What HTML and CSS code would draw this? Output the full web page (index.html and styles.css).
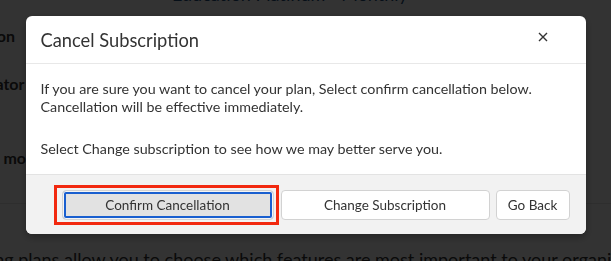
FILE: index.html
```html
<!DOCTYPE html>
<html lang="en">
<head>
  <meta charset="UTF-8">
  <meta name="viewport" content="width=device-width, initial-scale=1.0">
  <title>Cancel Subscription</title>
  <link rel="stylesheet" href="styles.css">
</head>
<body>
  <!-- page behind the dialog -->
  <div class="page">
    <h2 class="plan-name">Education Platinum - Monthly</h2>
    <div class="detail-row"><span class="label">Subscription</span></div>
    <div class="detail-row"><span class="label">Administrator</span></div>
    <div class="detail-row more"><span class="label">Learn more</span></div>
    <hr class="divider">
    <p class="intro">Flexible pricing plans allow you to choose which features are most important to your organization.</p>
  </div>

  <div class="overlay">
    <div class="modal">
      <div class="modal-header">
        <h3 class="modal-title">Cancel Subscription</h3>
        <button class="close-btn" aria-label="Close">
          <svg width="10" height="10" viewBox="0 0 10 10">
            <path d="M1 1 L9 9 M9 1 L1 9" stroke="#333" stroke-width="1.4" fill="none"/>
          </svg>
        </button>
      </div>
      <div class="modal-body">
        <p>If you are sure you want to cancel your plan, Select confirm cancellation below. Cancellation will be effective immediately.</p>
        <p>Select Change subscription to see how we may better serve you.</p>
      </div>
      <div class="modal-footer">
        <div class="highlight">
          <button class="btn btn-confirm">Confirm Cancellation</button>
        </div>
        <button class="btn btn-change">Change Subscription</button>
        <button class="btn btn-back">Go Back</button>
      </div>
    </div>
  </div>
</body>
</html>
```

FILE: styles.css
```css
/* page */
body {
  margin: 0;
  font-family: Lato, "Noto Sans", sans-serif;
  color: #333;
  background-color: #fff;
  overflow: hidden;
  height: 261px;
}

.page {
  position: relative;
}

.plan-name {
  margin: -17px 0 0 172px;
  font-size: 18px;
  font-weight: normal;
  color: #1f4e79;
}

.detail-row {
  font-weight: bold;
  font-size: 16px;
  margin-left: -74px;
  height: 22px;
}

.detail-row:first-of-type {
  margin-top: 21px;
}

.detail-row + .detail-row {
  margin-top: 26px;
}

.detail-row.more {
  margin-top: 52px;
  margin-left: -40px;
}

.divider {
  border: none;
  border-top: 1px solid #e6e6e6;
  margin: 33px 0 0 0;
}

.intro {
  margin: 44px 0 0 -105px;
  font-size: 18px;
  white-space: nowrap;
}

/* dialog */
.overlay {
  position: fixed;
  inset: 0;
  background-color: rgba(0, 0, 0, 0.8);
}

.modal {
  width: 560px;
  margin: 16px auto 0;
  background-color: #fff;
  border-radius: 6px;
  overflow: hidden;
  box-shadow: 0 3px 9px rgba(0, 0, 0, 0.3);
}

.modal-header {
  display: flex;
  align-items: center;
  justify-content: space-between;
  height: 47px;
  padding: 0 38px 0 15px;
  border-bottom: 1px solid #e8e8e8;
}

.modal-title {
  margin: 0;
  font-size: 18.3px;
  font-weight: normal;
  color: #333;
}

.close-btn {
  background: none;
  border: none;
  padding: 0;
  margin-top: -5px;
  display: flex;
}

.modal-body {
  padding: 16px 15px 16px 15px;
  font-size: 14.3px;
  line-height: 18px;
  color: #333;
}

.modal-body p {
  margin: 0;
}

.modal-body p + p {
  margin-top: 24px;
}

.modal-footer {
  display: flex;
  align-items: center;
  justify-content: flex-end;
  gap: 2px;
  height: 59px;
  padding: 0 16px;
  background-color: #f2f2f2;
  border-top: 1px solid #e3e3e3;
}

.highlight {
  border: 3px solid #f2290f;
  padding: 2px 2px 2px 5px;
  display: flex;
}

.btn {
  font-family: inherit;
  font-size: 13.5px;
  color: #333;
  height: 30px;
  border: 1px solid #d2d2d2;
  border-radius: 4px;
  background-color: #fff;
  padding: 0 10px;
}

.btn-confirm {
  width: 212px;
  background-color: #e2e2e2;
  box-shadow: inset 0 0 0 1px #f4f4f4, inset 0 0 0 3px #1a5fcf;
}

.btn-change {
  width: 209px;
}

.btn-back {
  width: 74px;
  margin-left: 4px;
}
```
